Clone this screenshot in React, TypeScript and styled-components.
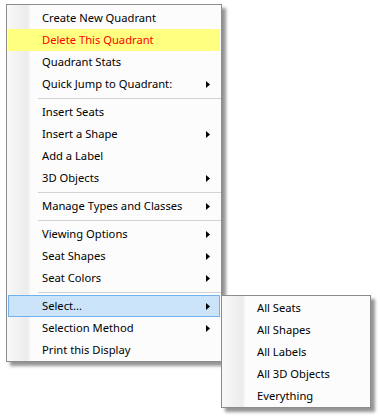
import React from 'react';
import styled, { createGlobalStyle } from 'styled-components';

const GlobalStyle = createGlobalStyle`
  html, body {
    margin: 0;
    padding: 0;
    background: #fff;
  }
  body {
    font-family: "Noto Sans", "Open Sans", "Liberation Sans", sans-serif;
    font-size: 11.2px;
    color: #000;
  }
`;

const Page = styled.div`
  width: 380px;
  height: 420px;
  padding: 4px 0 0 6px;
  box-sizing: border-box;
`;

const Menu = styled.div<{ width: number }>`
  position: relative;
  width: ${({ width }) => width}px;
  box-sizing: border-box;
  border: 1px solid #8c8c8c;
  background-color: #fcfcfc;
  background-image: linear-gradient(to right, #f8f8f8, #ececec 85%, #fdfdfd);
  background-size: 24px 100%;
  background-repeat: no-repeat;
  background-position: 0 0;
  box-shadow: 4px 4px 3px rgba(0, 0, 0, 0.42);
`;

const MainMenu = styled(Menu)`
  padding: 2px 0 0;
`;

const SubMenu = styled(Menu)`
  position: absolute;
  left: calc(100% + 1px);
  top: 0;
  padding: 1px 0 0;
  z-index: 2;
`;

type Variant = 'normal' | 'danger' | 'active';

const Item = styled.div<{ variant?: Variant }>`
  position: relative;
  display: flex;
  align-items: center;
  height: 22px;
  margin: 0 1px;
  padding: 0 10px 0 34px;
  box-sizing: border-box;
  white-space: nowrap;
  line-height: 22px;
  background: ${({ variant }) =>
    variant === 'danger' ? '#ffff80' : variant === 'active' ? '#cce4fa' : 'transparent'};
  color: ${({ variant }) => (variant === 'danger' ? '#ff0000' : '#000')};
  box-shadow: ${({ variant }) => (variant === 'active' ? 'inset 0 0 0 1px #73b0ee' : 'none')};
`;

const Label = styled.span`
  flex: 1;
`;

const Arrow = styled.svg`
  width: 4px;
  height: 7px;
  flex-shrink: 0;
`;

const Separator = styled.div`
  height: 6px;
  display: flex;
  align-items: center;
  padding-left: 31px;

  &::after {
    content: '';
    flex: 1;
    height: 1px;
    background: #d2d2d2;
  }
`;

const SubArrow = () => (
  <Arrow viewBox="0 0 4 7">
    <polygon points="0,0 4,3.5 0,7" fill="#000" />
  </Arrow>
);

type Entry =
  | { sep: true }
  | { label: string; sub?: boolean; variant?: Variant; children?: string[] };

const entries: Entry[] = [
  { label: 'Create New Quadrant' },
  { label: 'Delete This Quadrant', variant: 'danger' },
  { label: 'Quadrant Stats' },
  { label: 'Quick Jump to Quadrant:', sub: true },
  { sep: true },
  { label: 'Insert Seats' },
  { label: 'Insert a Shape', sub: true },
  { label: 'Add a Label' },
  { label: '3D Objects', sub: true },
  { sep: true },
  { label: 'Manage Types and Classes', sub: true },
  { sep: true },
  { label: 'Viewing Options', sub: true },
  { label: 'Seat Shapes', sub: true },
  { label: 'Seat Colors', sub: true },
  { sep: true },
  {
    label: 'Select...',
    sub: true,
    variant: 'active',
    children: ['All Seats', 'All Shapes', 'All Labels', 'All 3D Objects', 'Everything'],
  },
  { label: 'Selection Method', sub: true },
  { label: 'Print this Display' },
];

const App: React.FC = () => {
  return (
    <Page>
      <GlobalStyle />
      <MainMenu width={216}>
        {entries.map((entry, i) => {
          if ('sep' in entry) return <Separator key={i} />;
          return (
            <Item key={i} variant={entry.variant}>
              <Label>{entry.label}</Label>
              {entry.sub && <SubArrow />}
              {entry.children && (
                <SubMenu width={150}>
                  {entry.children.map((child) => (
                    <Item key={child}>
                      <Label>{child}</Label>
                    </Item>
                  ))}
                </SubMenu>
              )}
            </Item>
          );
        })}
      </MainMenu>
    </Page>
  );
};

export default App;
